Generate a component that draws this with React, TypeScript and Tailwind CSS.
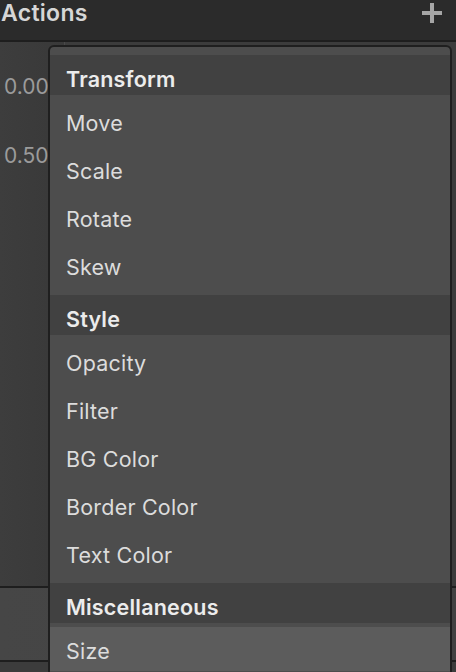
import React from 'react';

const groups = [
  { title: 'Transform', items: ['Move', 'Scale', 'Rotate', 'Skew'] },
  { title: 'Style', items: ['Opacity', 'Filter', 'BG Color', 'Border Color', 'Text Color'] },
  { title: 'Miscellaneous', items: ['Size'] },
];

export default function App() {
  const active = 'Size';

  return (
    <div
      className="relative w-[456px] h-[672px] overflow-hidden bg-[#3c3c3c] flex flex-col"
      style={{ fontFamily: 'Inter, "Noto Sans", sans-serif' }}
    >
      {/* panel header */}
      <div className="h-[42px] shrink-0 bg-[#2b2b2b] border-b-2 border-[#1e1e1e] flex items-start justify-between">
        <span className="pl-[1px] text-[23px] leading-[27px] tracking-[0.3px] font-semibold text-[#d6d6d6]">Actions</span>
        <svg width="20" height="20" viewBox="0 0 20 20" className="mt-[3px] mr-[14px]">
          <rect x="8" y="0" width="4" height="20" fill="#a6a6a6" />
          <rect x="0" y="8" width="20" height="4" fill="#a6a6a6" />
        </svg>
      </div>

      {/* keyframe list behind menu */}
      <div className="flex-1 flex">
        <div className="w-[65px] border-r border-[#4a4a4a] bg-gradient-to-r from-[#3d3d3d] to-[#393939] text-[21px] text-[#9b9b9b]">
          <div className="h-[100px] pt-[31px] pl-[4px] leading-[28px]">0.00</div>
          <div className="pl-[4px] leading-[28px]">0.50</div>
        </div>
        <div className="flex-1" />
      </div>
      <div className="h-[76px] shrink-0 border-y-2 border-[#1e1e1e] bg-gradient-to-r from-[#464646] to-[#424242]" />
      <div className="h-[10px] shrink-0 bg-[#3c3c3c]" />

      {/* dropdown menu */}
      <div className="absolute left-[48px] top-[45px] w-[404px] h-[640px] rounded-[6px] border-2 border-[#1f1f1f] bg-[#4d4d4d] overflow-hidden">
        {groups.map((g) => (
          <div key={g.title}>
            <div className="mt-2 h-10 pt-2 flex items-center bg-[#414141] px-[16px] text-[21.5px] tracking-[0.2px] font-semibold text-[#ececec]">
              {g.title}
            </div>
            {g.items.map((it) => (
              <div key={it} className="h-12 pt-1">
                <div
                  className={
                    'h-11 pt-[5px] flex items-center px-[16px] text-[21.5px] tracking-[0.2px] text-[#dcdcdc] ' +
                    (it === active ? 'bg-[#5c5c5c]' : '')
                  }
                >
                  {it}
                </div>
              </div>
            ))}
          </div>
        ))}
      </div>
    </div>
  );
}
